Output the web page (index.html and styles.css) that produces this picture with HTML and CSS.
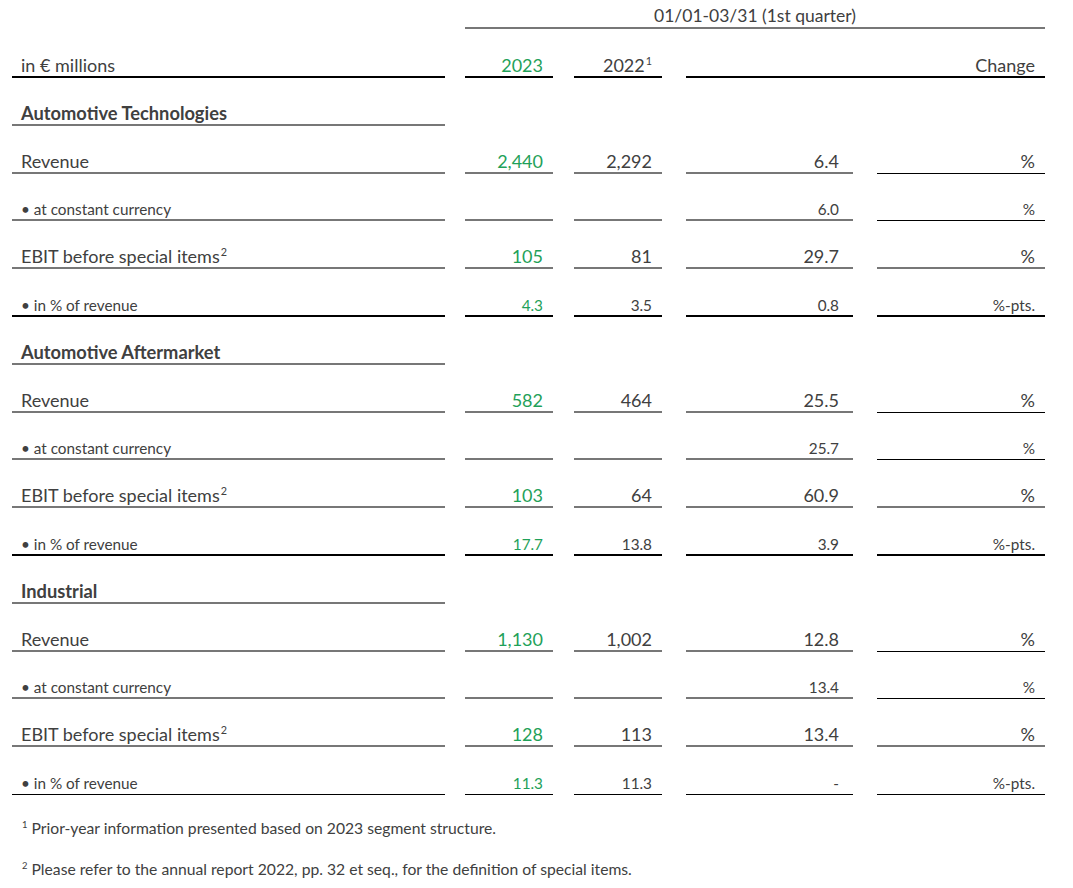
FILE: index.html
```html
<!DOCTYPE html>
<html>
<head>
<meta charset="utf-8">
<link rel="stylesheet" href="styles.css">
</head>
<body>
<div class="table">
  <div class="cell blank"></div>
  <div class="cell period">01/01-03/31 (1st quarter)</div>

  <div class="cell head label">in € millions</div>
  <div class="cell head num c2 green">2023</div>
  <div class="cell head num c3"><span>2022<sup>1</sup></span></div>
  <div class="cell head num change">Change</div>

  <div class="cell section">Automotive Technologies</div>
  <div class="cell empty"></div><div class="cell empty"></div><div class="cell empty"></div><div class="cell empty"></div>

  <div class="cell label">Revenue</div>
  <div class="cell num c2 green">2,440</div>
  <div class="cell num c3">2,292</div>
  <div class="cell num c4">6.4</div>
  <div class="cell num c5 thin">%</div>

  <div class="cell label small">• at constant currency</div>
  <div class="cell num c2 green small"></div>
  <div class="cell num c3 small"></div>
  <div class="cell num c4 small">6.0</div>
  <div class="cell num c5 thin small">%</div>

  <div class="cell label"><span>EBIT before special items<sup>2</sup></span></div>
  <div class="cell num c2 green">105</div>
  <div class="cell num c3">81</div>
  <div class="cell num c4">29.7</div>
  <div class="cell num c5">%</div>

  <div class="cell label small dark">• in % of revenue</div>
  <div class="cell num c2 green small dark">4.3</div>
  <div class="cell num c3 small dark">3.5</div>
  <div class="cell num c4 small dark">0.8</div>
  <div class="cell num c5 small dark">%-pts.</div>

  <div class="cell section">Automotive Aftermarket</div>
  <div class="cell empty"></div><div class="cell empty"></div><div class="cell empty"></div><div class="cell empty"></div>

  <div class="cell label">Revenue</div>
  <div class="cell num c2 green">582</div>
  <div class="cell num c3">464</div>
  <div class="cell num c4">25.5</div>
  <div class="cell num c5 thin">%</div>

  <div class="cell label small">• at constant currency</div>
  <div class="cell num c2 green small"></div>
  <div class="cell num c3 small"></div>
  <div class="cell num c4 small">25.7</div>
  <div class="cell num c5 thin small">%</div>

  <div class="cell label"><span>EBIT before special items<sup>2</sup></span></div>
  <div class="cell num c2 green">103</div>
  <div class="cell num c3">64</div>
  <div class="cell num c4">60.9</div>
  <div class="cell num c5">%</div>

  <div class="cell label small dark">• in % of revenue</div>
  <div class="cell num c2 green small dark">17.7</div>
  <div class="cell num c3 small dark">13.8</div>
  <div class="cell num c4 small dark">3.9</div>
  <div class="cell num c5 small dark">%-pts.</div>

  <div class="cell section">Industrial</div>
  <div class="cell empty"></div><div class="cell empty"></div><div class="cell empty"></div><div class="cell empty"></div>

  <div class="cell label">Revenue</div>
  <div class="cell num c2 green">1,130</div>
  <div class="cell num c3">1,002</div>
  <div class="cell num c4">12.8</div>
  <div class="cell num c5 thin">%</div>

  <div class="cell label small">• at constant currency</div>
  <div class="cell num c2 green small"></div>
  <div class="cell num c3 small"></div>
  <div class="cell num c4 small">13.4</div>
  <div class="cell num c5 thin small">%</div>

  <div class="cell label"><span>EBIT before special items<sup>2</sup></span></div>
  <div class="cell num c2 green">128</div>
  <div class="cell num c3">113</div>
  <div class="cell num c4">13.4</div>
  <div class="cell num c5">%</div>

  <div class="cell label small last">• in % of revenue</div>
  <div class="cell num c2 green small last">11.3</div>
  <div class="cell num c3 small last">11.3</div>
  <div class="cell num c4 small last">-</div>
  <div class="cell num c5 small last">%-pts.</div>
</div>

<div class="notes">
  <p><sup>1</sup> Prior-year information presented based on 2023 segment structure.</p>
  <p><sup>2</sup> Please refer to the annual report 2022, pp. 32 et seq., for the definition of special items.</p>
</div>
</body>
</html>
```

FILE: styles.css
```css
html, body {
  margin: 0;
  padding: 0;
  background: #ffffff;
}

body {
  font-family: Lato, "Open Sans", "Liberation Sans", sans-serif;
  color: #404040;
  padding-left: 12px;
}

/* tracks include the gap before each column: 433 | 20+88 | 21+88 | 24+167 | 24+168 */
.table {
  display: grid;
  grid-template-columns: 433px 108px 109px 191px 192px;
  grid-template-rows: 29px 49px repeat(15, 47.8px);
  width: 1033px;
}

.cell {
  display: flex;
  align-items: flex-end;
  padding: 0 0 2px 0;
  border-bottom: 2px solid #777777;
  font-size: 18px;
  line-height: 18px;
  white-space: nowrap;
  box-sizing: border-box;
  min-width: 0;
}

.c2 { margin-left: 20px; }
.c3 { margin-left: 21px; }
.c4 { margin-left: 24px; }
.c5 { margin-left: 24px; }

.cell.blank {
  border-bottom: none;
}

.cell.period {
  grid-column: 2 / span 4;
  margin-left: 20px;
  justify-content: center;
  padding-bottom: 2px;
  font-size: 17.5px;
}

.label {
  padding-left: 9px;
}

.num {
  justify-content: flex-end;
  padding-right: 10px;
}

.c4.num { padding-right: 14px; }

.head {
  border-bottom: 2px solid #000000;
  padding-bottom: 2px;
}

.head.change {
  grid-column: 4 / span 2;
  margin-left: 24px;
}

.section {
  grid-column: 1;
  padding-left: 9px;
  font-weight: bold;
  font-size: 18.3px;
  padding-bottom: 2px;
}

.empty {
  border-bottom: none;
}

.green { color: #1fa159; }

.small {
  font-size: 15.3px;
  line-height: 16px;
  padding-bottom: 2px;
}

.dark {
  border-bottom-color: #000000;
}

.cell.last {
  border-bottom: 1px solid #000000;
  padding-bottom: 3px;
}

.c5.thin {
  border-bottom: 1px solid #000000;
  padding-bottom: 3px;
}

.c5.thin.small {
  padding-bottom: 3px;
}

sup {
  font-size: 0.6em;
  line-height: 0;
  vertical-align: super;
  margin-left: 1px;
}

.notes {
  padding-left: 9px;
  font-size: 15.7px;
  line-height: 20px;
}

.notes p {
  margin: 23px 0 0 0;
}

.notes p + p {
  margin-top: 21px;
}
```
